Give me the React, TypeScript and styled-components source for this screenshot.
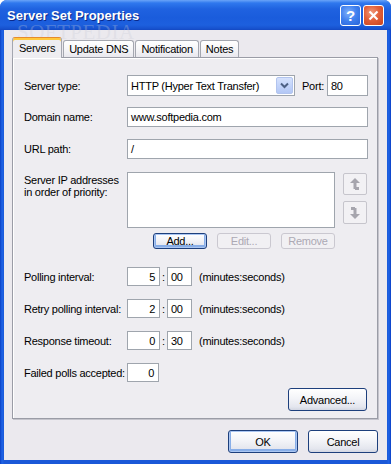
import React from "react"
import styled, { createGlobalStyle } from "styled-components"

const GlobalStyle = createGlobalStyle`
  html, body {
    margin: 0;
    padding: 0;
    background: #ffffff;
  }
  body {
    font-family: "Liberation Sans", Arial, sans-serif;
    font-size: 11px;
    letter-spacing: -0.25px;
    color: #000000;
  }
  * {
    box-sizing: border-box;
  }
`

const SWindow = styled.div`
  position: relative;
  width: 391px;
  height: 464px;
  display: flex;
  flex-direction: column;
  background: linear-gradient(90deg, #0a3fc4 0px, #1e63e6 2px, #1a58d8 4px, #1a58d8 387px, #1e63e6 389px, #0a3fc4 391px);
  border-radius: 7px 7px 0 0;
  overflow: hidden;
`

const STitleBar = styled.div`
  height: 30px;
  flex-shrink: 0;
  display: flex;
  align-items: center;
  padding: 0 7px 0 7px;
  background: linear-gradient(180deg, #6aa4f8 0px, #2f78ee 3px, #1f62e0 9px, #1a5cdc 18px, #1d60de 25px, #1650cc 29px, #1447c0 30px);
`

const STitle = styled.span`
  flex: 1;
  font-family: "Liberation Sans", Arial, sans-serif;
  font-weight: bold;
  font-size: 13px;
  line-height: 15px;
  letter-spacing: 0;
  color: #ffffff;
  text-shadow: 1px 1px 0 #0b2a8a;
  padding-top: 1px;
`

const STitleButton = styled.div<{ $close?: boolean }>`
  width: 21px;
  height: 21px;
  margin-left: 2px;
  border: 1px solid #ffffff;
  border-radius: 3px;
  display: flex;
  align-items: center;
  justify-content: center;
  color: #ffffff;
  font-weight: bold;
  font-size: 15px;
  background: ${({ $close }) =>
    $close
      ? "radial-gradient(circle at 40% 35%, #f09a7c 0%, #e2603a 45%, #c8431e 100%)"
      : "radial-gradient(circle at 40% 35%, #7fb0fa 0%, #3f7fee 50%, #2a64d8 100%)"};
`

const SWatermark = styled.span`
  position: absolute;
  left: 17px;
  top: 24px;
  font-family: "Liberation Serif", "Times New Roman", serif;
  font-size: 21px;
  line-height: 16px;
  letter-spacing: 0.5px;
  color: rgba(200, 202, 215, 0.3);
  pointer-events: none;
`

const SBody = styled.div`
  flex: 1;
  margin: 0 4px 4px 4px;
  background: #ebe9ee;
  padding: 7px 9px 7px 8px;
  display: flex;
  flex-direction: column;
`

const STabStrip = styled.div`
  height: 20px;
  display: flex;
  align-items: flex-end;
  gap: 1px;
  position: relative;
  z-index: 1;
`

const STab = styled.div<{ $active?: boolean }>`
  height: ${({ $active }) => ($active ? 21 : 17)}px;
  margin-bottom: ${({ $active }) => ($active ? -1 : 0)}px;
  padding: 0 ${({ $active }) => ($active ? 6 : 5)}px;
  display: flex;
  align-items: center;
  font-size: 11px;
  line-height: 13px;
  border: 1px solid #a4a7b0;
  border-bottom: none;
  border-top-color: ${({ $active }) => ($active ? "#e68b2c" : "#a4a7b0")};
  border-radius: 3px 3px 0 0;
  background: ${({ $active }) =>
    $active ? "#eeedf1" : "linear-gradient(180deg, #ffffff 0%, #f6f6f8 50%, #e9e8ee 100%)"};
  box-shadow: ${({ $active }) => ($active ? "inset 0 2px 0 #ffc83c" : "none")};
`

const SPanel = styled.div`
  height: 362px;
  border: 1px solid #9a9ca6;
  background: #eeedf1;
  box-shadow: 1px 1px 0 #c4c4cc, inset 1px 1px 0 #ffffff;
  padding: 17px 9px 7px 11px;
  display: flex;
  flex-direction: column;
`

const SRow = styled.div<{ $mt?: number; $h?: number }>`
  display: flex;
  align-items: center;
  margin-top: ${({ $mt }) => $mt ?? 0}px;
  height: ${({ $h }) => ($h ? `${$h}px` : "auto")};
`

const SLabel = styled.div`
  width: 103px;
  flex-shrink: 0;
  white-space: nowrap;
`

const SMultiLabel = styled(SLabel)`
  align-self: flex-start;
  padding-top: 2px;
  line-height: 12px;
`

const SInput = styled.div<{ $w?: number; $right?: boolean }>`
  height: 100%;
  ${({ $w }) => ($w ? `width: ${$w}px; flex-shrink: 0;` : "flex: 1;")}
  background: #ffffff;
  border: 1px solid #9fa5ad;
  display: flex;
  align-items: center;
  justify-content: ${({ $right }) => ($right ? "flex-end" : "flex-start")};
  padding: 0 4px 0 3px;
  white-space: nowrap;
  overflow: hidden;
`

const SSelect = styled.div`
  flex: 1;
  height: 100%;
  background: #ffffff;
  border: 1px solid #9fa5ad;
  display: flex;
  align-items: center;
  padding: 0 1px 0 3px;
  white-space: nowrap;
`

const SSelectText = styled.span`
  flex: 1;
  overflow: hidden;
`

const SDropButton = styled.div`
  width: 17px;
  height: 17px;
  border: 1px solid #b2c4ee;
  border-radius: 2px;
  background: linear-gradient(180deg, #d6e2fd 0%, #c3d4fa 50%, #b3c7f5 100%);
  display: flex;
  align-items: center;
  justify-content: center;
`

const SPortLabel = styled.span`
  margin: 0 3px 0 7px;
`

const SListBox = styled.div`
  width: 208px;
  height: 56px;
  flex-shrink: 0;
  background: #ffffff;
  border: 1px solid #9fa5ad;
`

const SArrowCol = styled.div`
  align-self: flex-start;
  margin: 1px 0 0 8px;
  display: flex;
  flex-direction: column;
  gap: 6px;
`

const SArrowButton = styled.div<{ $h: number }>`
  width: 24px;
  height: ${({ $h }) => $h}px;
  border: 1px solid #c6c5cc;
  border-radius: 2px;
  background: #f2f1f4;
  display: flex;
  align-items: center;
  justify-content: center;
`

const SListButtons = styled.div`
  width: 208px;
  margin-left: 103px;
  display: flex;
  justify-content: flex-end;
  gap: 10px;
  height: 100%;
`

const SButton = styled.div<{ $w: number; $h?: number; $variant?: "default" | "disabled" | "normal" }>`
  width: ${({ $w }) => $w}px;
  height: ${({ $h }) => $h ?? 23}px;
  flex-shrink: 0;
  display: flex;
  align-items: center;
  justify-content: center;
  border-radius: 3px;
  font-size: 11px;
  border: 1px solid ${({ $variant }) => ($variant === "disabled" ? "#cac8d0" : "#1d3f7c")};
  color: ${({ $variant }) => ($variant === "disabled" ? "#aca9b3" : "#000000")};
  background: ${({ $variant }) =>
    $variant === "disabled"
      ? "#f1f0f3"
      : "linear-gradient(180deg, #ffffff 0%, #f3f4f8 45%, #e4e6ee 85%, #d2d6e2 100%)"};
  box-shadow: ${({ $variant }) =>
    $variant === "default" ? "inset 0 0 0 1px #aac6f2, inset 0 -1px 0 2px #88aee8" : "none"};
`

const SColon = styled.span`
  width: 7px;
  text-align: center;
  flex-shrink: 0;
`

const SHint = styled.span`
  margin-left: 7px;
  white-space: nowrap;
`

const SRightRow = styled(SRow)`
  justify-content: flex-end;
  padding-right: 1px;
`

const SFooter = styled.div`
  margin-top: 11px;
  display: flex;
  justify-content: flex-end;
  gap: 10px;
`

const ChevronIcon = () => (
  <svg width="9" height="7" viewBox="0 0 9 7">
    <polyline points="1,1.5 4.5,5 8,1.5" fill="none" stroke="#4d6185" strokeWidth="2" />
  </svg>
)

const UpIcon = () => (
  <svg width="12" height="14" viewBox="0 0 12 14">
    <polygon points="1,6 6,1 11,6" fill="#a6a5ad" />
    <rect x="4.5" y="6" width="3" height="6" fill="#a6a5ad" />
    <rect x="6" y="10" width="4" height="3" fill="#a6a5ad" />
  </svg>
)

const DownIcon = () => (
  <svg width="12" height="14" viewBox="0 0 12 14">
    <rect x="2" y="1" width="4" height="3" fill="#a6a5ad" />
    <rect x="4.5" y="2" width="3" height="6" fill="#a6a5ad" />
    <polygon points="1,8 6,13 11,8" fill="#a6a5ad" />
  </svg>
)

const CloseIcon = () => (
  <svg width="11" height="11" viewBox="0 0 11 11">
    <line x1="1.5" y1="1.5" x2="9.5" y2="9.5" stroke="#ffffff" strokeWidth="2.2" />
    <line x1="9.5" y1="1.5" x2="1.5" y2="9.5" stroke="#ffffff" strokeWidth="2.2" />
  </svg>
)

const intervals = [
  { label: "Polling interval:", min: "5", sec: "00" },
  { label: "Retry polling interval:", min: "2", sec: "00" },
  { label: "Response timeout:", min: "0", sec: "30" },
]

const App = () => {
  return (
    <>
      <GlobalStyle />
      <SWindow>
        <STitleBar>
          <STitle>Server Set Properties</STitle>
          <STitleButton>?</STitleButton>
          <STitleButton $close>
            <CloseIcon />
          </STitleButton>
        </STitleBar>
        <SWatermark>SOFTPEDIA</SWatermark>

        <SBody>
          <STabStrip>
            <STab $active>Servers</STab>
            <STab>Update DNS</STab>
            <STab>Notification</STab>
            <STab>Notes</STab>
          </STabStrip>

          <SPanel>
            <SRow $h={21}>
              <SLabel>Server type:</SLabel>
              <SSelect>
                <SSelectText>HTTP (Hyper Text Transfer)</SSelectText>
                <SDropButton>
                  <ChevronIcon />
                </SDropButton>
              </SSelect>
              <SPortLabel>Port:</SPortLabel>
              <SInput $w={41}>80</SInput>
            </SRow>

            <SRow $mt={11} $h={20}>
              <SLabel>Domain name:</SLabel>
              <SInput>www.softpedia.com</SInput>
            </SRow>

            <SRow $mt={12} $h={20}>
              <SLabel>URL path:</SLabel>
              <SInput>/</SInput>
            </SRow>

            <SRow $mt={13} $h={56}>
              <SMultiLabel>
                Server IP addresses
                <br />
                in order of priority:
              </SMultiLabel>
              <SListBox />
              <SArrowCol>
                <SArrowButton $h={22}>
                  <UpIcon />
                </SArrowButton>
                <SArrowButton $h={23}>
                  <DownIcon />
                </SArrowButton>
              </SArrowCol>
            </SRow>

            <SRow $mt={5} $h={16}>
              <SListButtons>
                <SButton $w={54} $h={16} $variant="default">Add...</SButton>
                <SButton $w={54} $h={16} $variant="disabled">Edit...</SButton>
                <SButton $w={54} $h={16} $variant="disabled">Remove</SButton>
              </SListButtons>
            </SRow>

            {intervals.map((item, index) => (
              <SRow key={index} $mt={index === 0 ? 18 : 13} $h={19}>
                <SLabel>{item.label}</SLabel>
                <SInput $w={33} $right>{item.min}</SInput>
                <SColon>:</SColon>
                <SInput $w={25}>{item.sec}</SInput>
                <SHint>(minutes:seconds)</SHint>
              </SRow>
            ))}

            <SRow $mt={13} $h={19}>
              <SLabel>Failed polls accepted:</SLabel>
              <SInput $w={32} $right>0</SInput>
            </SRow>

            <SRightRow $mt={6}>
              <SButton $w={79} $variant="normal">Advanced...</SButton>
            </SRightRow>
          </SPanel>

          <SFooter>
            <SButton $w={70} $variant="default">OK</SButton>
            <SButton $w={70} $variant="normal">Cancel</SButton>
          </SFooter>
        </SBody>
      </SWindow>
    </>
  )
}

export default App
